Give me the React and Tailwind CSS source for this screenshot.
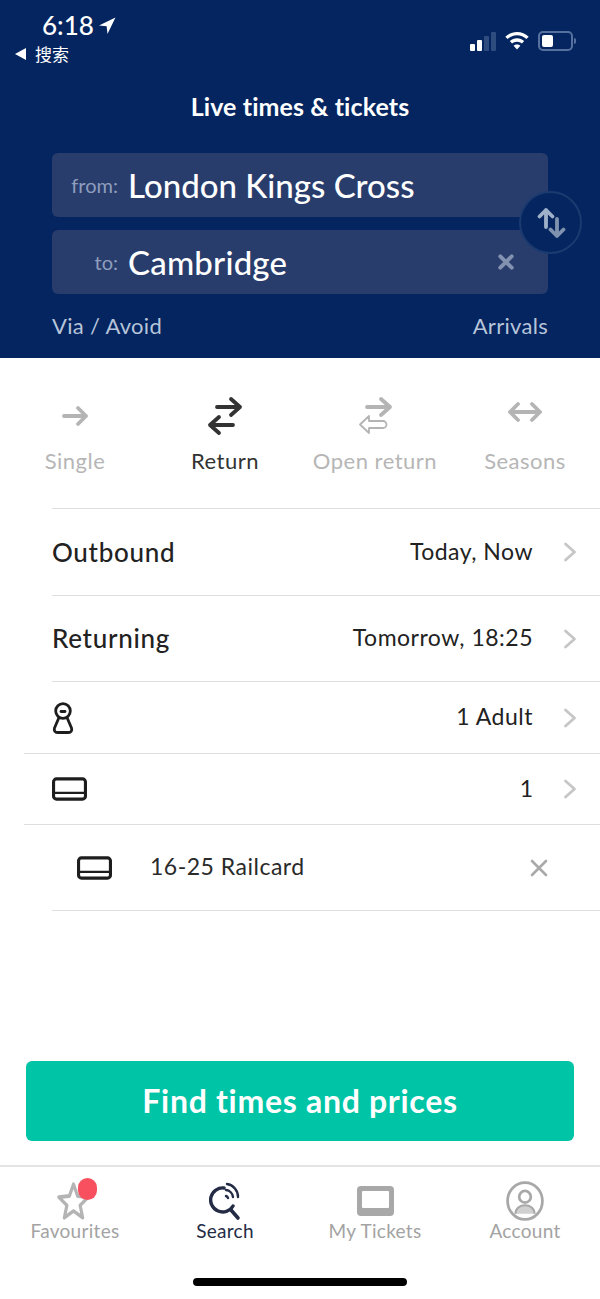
const font = { fontFamily: 'Lato, sans-serif' }

function CardIcon({ className }) {
  return (
    <svg viewBox="0 0 36 24" className={className} fill="none" stroke="currentColor">
      <rect x="1.600" y="1.600" width="32.800" height="20.800" rx="3" strokeWidth="3.200" />
      <path d="M2 16h32" strokeWidth="2.200" />
    </svg>
  )
}

function Chevron() {
  return (
    <svg viewBox="0 0 14 20" className="w-[14px] h-[20px] text-[#c6c6c6]" fill="none" stroke="currentColor" strokeWidth="2.800" strokeLinecap="round" strokeLinejoin="round">
      <path d="M2.500 2l9 8-9 8" />
    </svg>
  )
}

function Arrow({ d, className = 'text-[#b4b4b4]', w = 3.8 }) {
  return (
    <path d={d} className={className} stroke="currentColor" strokeWidth={w} fill="none" strokeLinecap="round" strokeLinejoin="round" />
  )
}

function Tab({ label, active, children }) {
  return (
    <div className="flex-1 flex flex-col items-center">
      <div className="h-[63px] flex items-center justify-center">
        <svg viewBox="0 0 36 40" className="w-9 h-10">{children}</svg>
      </div>
      <div className={`text-[22px] leading-7 tracking-[0.5px] ${active ? 'text-[#333]' : 'text-[#b6b6b6]'}`}>{label}</div>
    </div>
  )
}

function Row({ label, value, icon, className }) {
  return (
    <div className={`flex items-center justify-between pr-[23px] ${className}`}>
      <div className="text-[26px] font-medium tracking-[0.7px] text-[#222]">{label}{icon}</div>
      <div className="flex items-center gap-[30px]">
        <span className="mb-[2px] text-[23px] tracking-[0.5px] text-[#222]">{value}</span>
        <Chevron />
      </div>
    </div>
  )
}

function NavItem({ label, active, children }) {
  return (
    <div className="flex-1 flex flex-col items-center">
      <div className="relative h-[44px] w-full pt-[8px] flex items-center justify-center">{children}</div>
      <div className={`text-[19px] leading-6 tracking-[0.3px] ${active ? 'text-[#232b45]' : 'text-[#a3a3a3]'}`}>{label}</div>
    </div>
  )
}

export default function App() {
  return (
    <div className="w-[600px] h-[1299px] bg-white flex flex-col overflow-hidden" style={font}>
      {/* header */}
      <div className="h-[358px] bg-[#04255f] text-white px-[52px] flex flex-col">
        <div className="-mx-[52px] h-[66px] px-[15px] pt-[10px] flex justify-between">
          <div>
            <div className="pl-[27px] flex items-center gap-[5px] text-[26px] leading-[30px] font-medium">
              6:18
              <svg viewBox="0 0 16 16" className="w-[17px] h-[17px] fill-white"><path d="M15.500.5 0 8l7.200.8.8 7.200z" /></svg>
            </div>
            <div className="mt-[2px] flex items-center gap-[9px] text-[17px] leading-[24px]" style={{ fontFamily: '"Noto Sans CJK SC", sans-serif' }}>
              <span className="w-0 h-0 border-y-[6px] border-y-transparent border-r-[11px] border-r-white" />
              搜索
            </div>
          </div>
          <div className="flex items-center h-[36px] mt-[13px] pr-[9px] gap-[8px]">
            <svg viewBox="0 0 28 20" className="w-7 h-5 fill-white">
              <rect x="1" y="13" width="5" height="7" rx="1" />
              <rect x="8" y="9" width="5" height="11" rx="1" />
              <rect x="15" y="5" width="5" height="15" rx="1" fill="#2f4c7f" />
              <rect x="22" y="1" width="5" height="19" rx="1" fill="#2f4c7f" />
            </svg>
            <svg viewBox="0 0 24 18" className="w-6 h-[20px] fill-white">
              <path d="M12 0C7.500 0 3.400 1.800.3 4.700l2.300 2.400C5.100 4.800 8.400 3.300 12 3.300s6.900 1.500 9.400 3.800l2.300-2.400C20.600 1.800 16.500 0 12 0z" />
              <path d="M12 6.300c-2.800 0-5.300 1.100-7.200 2.800l2.300 2.400C8.400 10.400 10.100 9.700 12 9.700s3.600.7 4.900 1.800l2.300-2.400C17.300 7.400 14.800 6.300 12 6.300z" />
              <path d="M12 12.500c-1.300 0-2.500.5-3.400 1.300L12 17.500l3.400-3.700c-.9-.8-2.100-1.300-3.400-1.300z" />
            </svg>
            <div className="ml-[1px] flex items-center gap-[1px]">
              <div className="w-[35px] h-[20px] rounded-[5px] border-2 border-[#56719f] p-[2px] flex">
                <div className="w-[11px] rounded-[2px] bg-white" />
              </div>
              <div className="w-[2px] h-[6px] rounded-r bg-[#56719f]" />
            </div>
          </div>
        </div>
        <h1 className="mt-[24px] text-center text-[25px] leading-[32px] font-bold tracking-[0.1px]">Live times &amp; tickets</h1>

        <div className="relative mt-[31px] flex flex-col gap-[13px]">
          <div className="h-[64px] rounded-md bg-[#293d6d] flex items-center">
            <span className="w-[66px] text-right text-[20px] text-[#8f9dbd]">from:</span>
            <span className="mt-[2px] ml-[10px] text-[33px] font-medium">London Kings Cross</span>
          </div>
          <div className="h-[64px] rounded-md bg-[#293d6d] flex items-center">
            <span className="w-[66px] text-right text-[20px] text-[#8f9dbd]">to:</span>
            <span className="mt-[2px] ml-[10px] text-[33px] tracking-[0.2px] font-medium flex-1">Cambridge</span>
            <svg viewBox="0 0 14 14" className="w-[16px] h-[16px] mr-[34px] text-[#8292b0]">
              <path d="M2 2l10 10M12 2 2 12" stroke="currentColor" strokeWidth="3.400" strokeLinecap="round" />
            </svg>
          </div>
          <div className="absolute right-[-34px] top-[38px] w-[63px] h-[63px] rounded-full bg-[#04255f] border-2 border-[#1b3a70] flex items-center justify-center">
            <svg viewBox="0 0 30 32" className="w-[30px] h-[32px]" fill="none" stroke="#9fb1c9" strokeWidth="3.800" strokeLinecap="round" strokeLinejoin="round">
              <path d="M10 3v17M3.500 9.500 10 3l6.500 6.500" />
              <path d="M21 12v17M14.500 22.500 21 29l6.500-6.500" stroke="#7f92ae" />
            </svg>
          </div>
        </div>

        <div className="mt-[18px] flex justify-between text-[22px] leading-7 tracking-[0.3px] text-[#b7c4da]">
          <span>Via / Avoid</span>
          <span>Arrivals</span>
        </div>
      </div>

      {/* journey type */}
      <div className="h-[150px] flex pt-[26px]">
        <Tab label="Single">
          <Arrow d="M7 20h22M21 12l8 8-8 8" />
        </Tab>
        <Tab label="Return" active>
          <Arrow d="M10 11h23M24 3l9 8-9 8" className="text-[#333]" />
          <Arrow d="M26 29H3M12 21l-9 8 9 8" className="text-[#333]" />
        </Tab>
        <Tab label="Open return">
          <Arrow d="M10 11h23M24 3l9 8-9 8" />
          <path d="M12 20l-9 8.500 9 8.500v-5h14a3 3 0 0 0 0-7H12z" fill="none" stroke="#b4b4b4" strokeWidth="1.800" strokeLinejoin="round" />
        </Tab>
        <Tab label="Seasons">
          <Arrow d="M3 16h30M11 8l-8 8 8 8M25 8l8 8-8 8" />
        </Tab>
      </div>

      {/* journey options */}
      <div className="flex flex-col">
        <Row label="Outbound" value="Today, Now" className="ml-[52px] h-[87px] border-t border-[#dedede]" />
        <Row label="Returning" value="Tomorrow, 18:25" className="ml-[52px] h-[86px] border-t border-[#dedede]" />
        <Row
          value="1 Adult"
          className="ml-[52px] h-[72px] border-t border-[#dedede]"
          icon={
            <svg viewBox="0 0 22 32" className="w-[22px] h-[32px] text-[#1d1d1d]" fill="none" stroke="currentColor" strokeWidth="2.800" strokeLinejoin="round">
              <circle cx="11" cy="9" r="7.300" />
              <path d="M7 15.500 2.500 26c-.8 2.500.5 4.500 3 4.500h11c2.500 0 3.800-2 3-4.500L15 15.500" />
              <path d="M9 9.500h4" strokeLinecap="round" />
            </svg>
          }
        />
        <div className="ml-[24px] h-[71px] pl-[28px] border-t border-[#dedede] flex items-center justify-between pr-[23px]">
          <CardIcon className="w-[35px] h-[24px] text-[#1d1d1d]" />
          <div className="flex items-center gap-[30px]">
            <span className="mb-[2px] text-[23px] text-[#222]">1</span>
            <Chevron />
          </div>
        </div>
        <div className="ml-[24px] h-[86px] pl-[53px] border-t border-[#dedede] flex items-center">
          <CardIcon className="w-[35px] h-[24px] text-[#1d1d1d]" />
          <span className="mb-[2px] ml-[38px] flex-1 text-[23px] tracking-[0.5px] text-[#2a2a2a]">16-25 Railcard</span>
          <svg viewBox="0 0 18 18" className="w-[18px] h-[18px] mr-[52px] text-[#a9a9a9]">
            <path d="M2 2l14 14M16 2 2 16" stroke="currentColor" strokeWidth="2.600" strokeLinecap="round" />
          </svg>
        </div>
        <div className="ml-[52px] border-t border-[#dedede]" />
      </div>

      <div className="flex-1" />

      <button className="mx-[26px] h-[80px] shrink-0 rounded-md bg-[#00c4a6] text-white text-[32px] font-bold tracking-[0.7px]">
        Find times and prices
      </button>

      {/* bottom nav */}
      <div className="mt-[24px] h-[134px] shrink-0 border-t-2 border-[#e4e4e4] pt-[8px] flex flex-col">
        <div className="flex">
          <NavItem label="Favourites">
            <svg viewBox="0 0 36 36" preserveAspectRatio="none" className="-ml-[4px] w-[33px] h-[40px]">
              <path d="M18 3l4.500 10.500 11.500 1-8.800 7.400 2.800 11.100L18 27l-10 6 2.800-11.100L2 14.500l11.500-1z" fill="none" stroke="#b4b4b4" strokeWidth="3.400" strokeLinejoin="round" />
            </svg>
            <span className="absolute left-[78px] top-[3px] w-[19px] h-[22px] rounded-full bg-[#f8505f]" />
          </NavItem>
          <NavItem label="Search" active>
            <svg viewBox="0 0 32 38" className="w-[32px] h-[40px]" fill="none" stroke="#232b45" strokeLinecap="round">
              <path d="M15 6A12 12 0 1 0 24 24" strokeWidth="3.400" />
              <path d="M18 2a13 13 0 0 1 11 13" strokeWidth="2.400" />
              <path d="M17 8a8 8 0 0 1 7 7" strokeWidth="2.400" />
              <path d="M17 14a3 3 0 0 1 2 2" strokeWidth="2.400" />
              <path d="M22 28l7 8" strokeWidth="3.600" />
            </svg>
          </NavItem>
          <NavItem label="My Tickets">
            <div className="w-[37px] h-[30px] rounded-[4px] bg-[#a8a8a8] p-[5px] pb-[8px]">
              <div className="w-full h-full bg-white rounded-[1px]" />
            </div>
          </NavItem>
          <NavItem label="Account">
            <svg viewBox="0 0 36 38" className="w-[38px] h-[42px]" fill="none" stroke="#a8a8a8" strokeWidth="2.600">
              <ellipse cx="18" cy="19" rx="16.500" ry="17.500" />
              <circle cx="18" cy="15" r="5.500" />
              <path d="M9 31c0-5 4-8 9-8s9 3 9 8" fill="#d0d0d0" strokeWidth="2" />
            </svg>
          </NavItem>
        </div>
        <div className="mt-[35px] mx-auto w-[214px] h-[8px] rounded-full bg-black" />
      </div>
    </div>
  )
}
